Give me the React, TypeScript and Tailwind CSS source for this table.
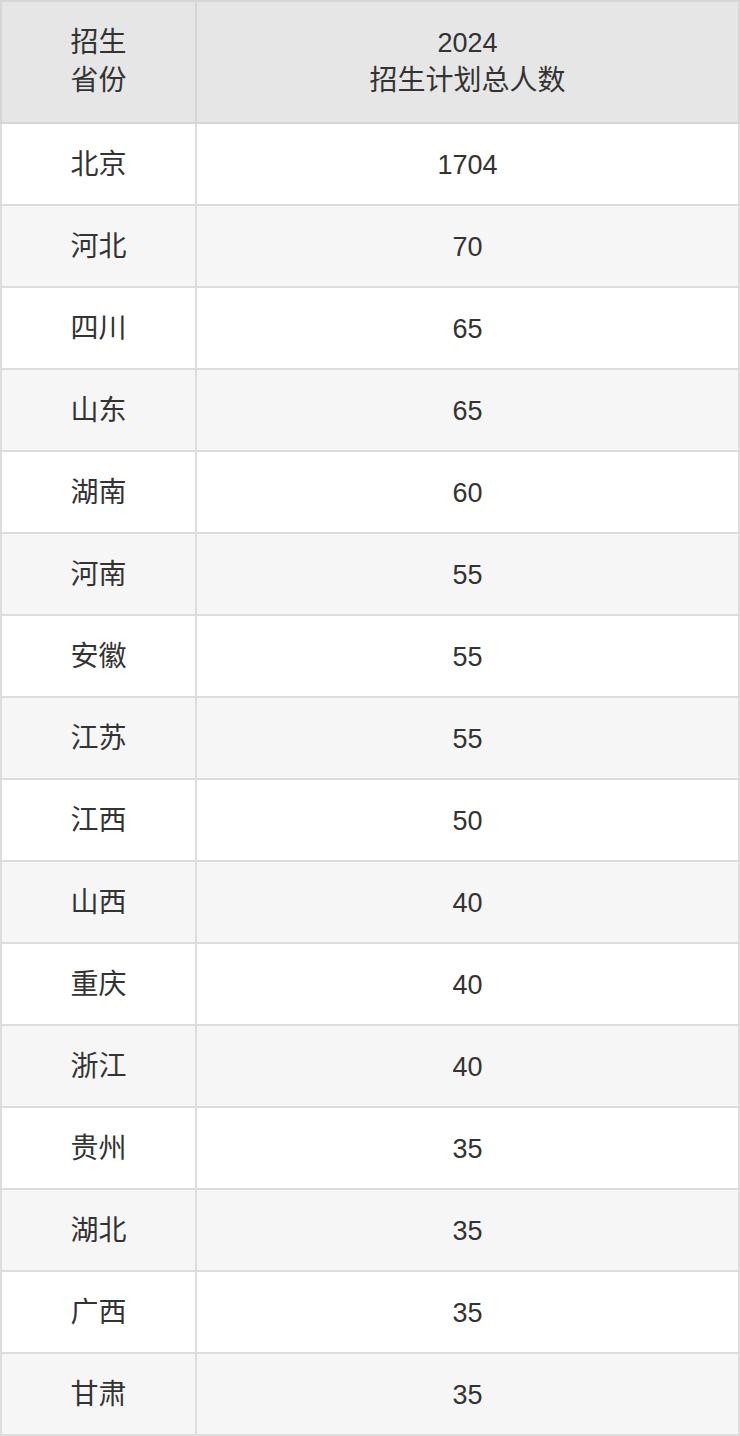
const rows: [string, string][] = [
  ['北京', '1704'],
  ['河北', '70'],
  ['四川', '65'],
  ['山东', '65'],
  ['湖南', '60'],
  ['河南', '55'],
  ['安徽', '55'],
  ['江苏', '55'],
  ['江西', '50'],
  ['山西', '40'],
  ['重庆', '40'],
  ['浙江', '40'],
  ['贵州', '35'],
  ['湖北', '35'],
  ['广西', '35'],
  ['甘肃', '35'],
]

export default function App() {
  return (
    <div
      className="w-[740px] bg-white text-[#333333]"
      style={{ fontFamily: '"Liberation Sans", "Noto Sans CJK SC", sans-serif' }}
    >
      <table className="w-[740px] table-fixed border-collapse text-center leading-[38px]">
        <colgroup>
          <col className="w-[195px]" />
          <col />
        </colgroup>
        <thead>
          <tr className="h-[122px] bg-[#e6e6e6]">
            <th className="border-2 border-[#d6d6d6] px-2 text-[28px] font-normal">
              招生
              <br />
              省份
            </th>
            <th className="border-2 border-[#d6d6d6] px-2 font-normal">
              <div className="text-[27px]">2024</div>
              <div className="text-[28px]">招生计划总人数</div>
            </th>
          </tr>
        </thead>
        <tbody>
          {rows.map(([province, count], i) => (
            <tr
              key={province}
              className={i % 2 === 0 ? 'h-[82px] bg-white' : 'h-[82px] bg-[#f6f6f6]'}
            >
              <td className="border-2 border-[#dddddd] px-2 pt-[2px] text-[28px]">{province}</td>
              <td className="border-2 border-[#dddddd] px-2 pt-[2px] text-[27px]">{count}</td>
            </tr>
          ))}
        </tbody>
      </table>
    </div>
  )
}
